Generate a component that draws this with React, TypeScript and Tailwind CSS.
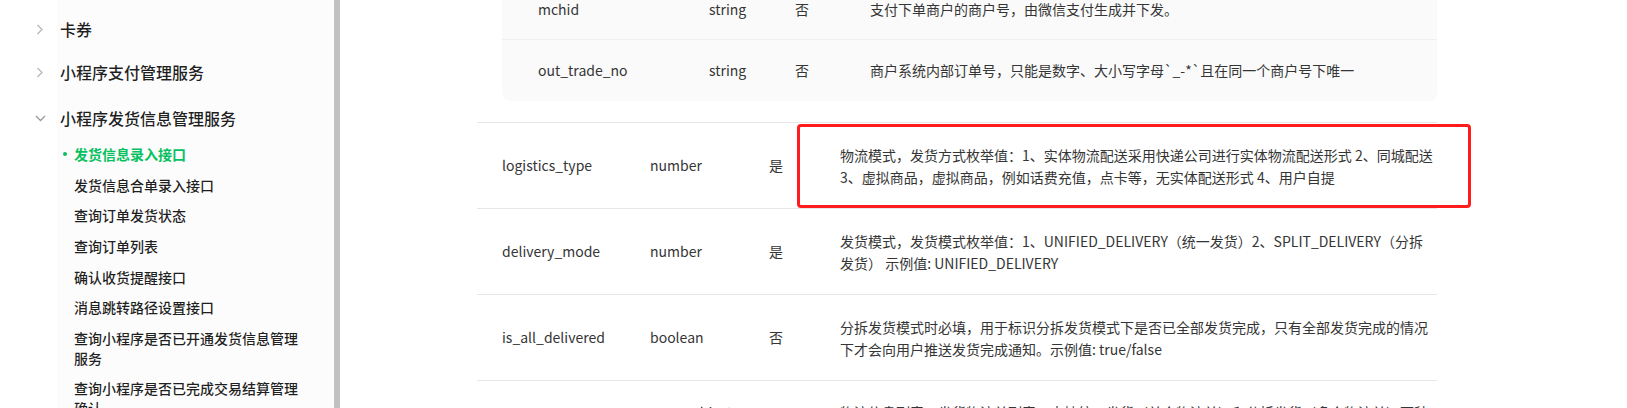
import React from "react";

const ChevronRight = () => (
  <svg width="8" height="11" viewBox="0 0 8 11" fill="none">
    <polyline points="1.5,1 6,5.5 1.5,10" stroke="#b8b8b8" strokeWidth="1.3" fill="none" />
  </svg>
);

const ChevronDown = () => (
  <svg width="11" height="7" viewBox="0 0 11 7" fill="none">
    <polyline points="1,1 5.5,5.5 10,1" stroke="#9a9a9a" strokeWidth="1.3" fill="none" />
  </svg>
);

const subItems = [
  "发货信息合单录入接口",
  "查询订单发货状态",
  "查询订单列表",
  "确认收货提醒接口",
  "消息跳转路径设置接口",
  "查询小程序是否已开通发货信息管理服务",
  "查询小程序是否已完成交易结算管理确认",
];

type Row = { name: string; type: string; req: string; desc: string[] };

const mainRows: Row[] = [
  {
    name: "logistics_type",
    type: "number",
    req: "是",
    desc: [
      "物流模式，发货方式枚举值：1、实体物流配送采用快递公司进行实体物流配送形式 2、同城配送",
      "3、虚拟商品，虚拟商品，例如话费充值，点卡等，无实体配送形式 4、用户自提",
    ],
  },
  {
    name: "delivery_mode",
    type: "number",
    req: "是",
    desc: [
      "发货模式，发货模式枚举值：1、UNIFIED_DELIVERY（统一发货）2、SPLIT_DELIVERY（分拆",
      "发货） 示例值: UNIFIED_DELIVERY",
    ],
  },
  {
    name: "is_all_delivered",
    type: "boolean",
    req: "否",
    desc: [
      "分拆发货模式时必填，用于标识分拆发货模式下是否已全部发货完成，只有全部发货完成的情况",
      "下才会向用户推送发货完成通知。示例值: true/false",
    ],
  },
];

export default function App() {
  return (
    <div className="flex h-[408px] w-[1627px] overflow-hidden bg-white font-['Noto_Sans_CJK_SC',sans-serif]">
      {/* Sidebar */}
      <aside className="w-[334px] shrink-0 bg-[linear-gradient(to_right,#ffffff_57px,#fcfcfc_57px)] pt-[7px] text-[rgba(0,0,0,0.88)]">
        <div className="flex h-[44px] items-center">
          <div className="flex w-[60px] shrink-0 pl-[36px]">
            <ChevronRight />
          </div>
          <span className="text-[16px] font-medium leading-[24px]">卡券</span>
        </div>
        <div className="flex h-[42px] items-center">
          <div className="flex w-[60px] shrink-0 pl-[36px]">
            <ChevronRight />
          </div>
          <span className="text-[16px] font-medium leading-[24px]">小程序支付管理服务</span>
        </div>
        <div className="flex h-[46px] items-center pt-[4px]">
          <div className="flex w-[60px] shrink-0 pl-[35px]">
            <ChevronDown />
          </div>
          <span className="text-[16px] font-medium leading-[24px]">小程序发货信息管理服务</span>
        </div>
        <ul>
          <li className="flex items-center py-[5.3px] pl-[63px] pr-[30px] text-[14px] font-semibold leading-[20px] text-[#07c160]">
            <span className="mr-[7px] h-[4px] w-[4px] shrink-0 rounded-full bg-[#07c160]" />
            <span>发货信息录入接口</span>
          </li>
          {subItems.map((s) => (
            <li
              key={s}
              className="py-[5.3px] pl-[74px] pr-[30px] text-[14px] font-medium leading-[20px] text-[rgba(0,0,0,0.88)]"
            >
              {s}
            </li>
          ))}
        </ul>
      </aside>

      {/* Scrollbar */}
      <div className="w-[6px] shrink-0 bg-[#c1c1c1]" />

      {/* Main */}
      <main className="flex-1 pl-[137px] text-[14px] text-[#353535]">
        <div className="w-[960px]">
          {/* nested table */}
          <div className="ml-[25px] mt-[-21px] rounded-b-[8px] bg-[#fafafa]">
            <div className="flex h-[61px] items-center border-b border-[#efefef]">
              <div className="w-[207px] shrink-0 pl-[36px]">mchid</div>
              <div className="w-[86px] shrink-0">string</div>
              <div className="w-[75px] shrink-0">否</div>
              <div className="flex-1">支付下单商户的商户号，由微信支付生成并下发。</div>
            </div>
            <div className="flex h-[61px] items-center">
              <div className="w-[207px] shrink-0 pl-[36px]">out_trade_no</div>
              <div className="w-[86px] shrink-0">string</div>
              <div className="w-[75px] shrink-0">否</div>
              <div className="flex-1">商户系统内部订单号，只能是数字、大小写字母`_-*`且在同一个商户号下唯一</div>
            </div>
          </div>

          {/* main table */}
          <div className="relative mt-[21px] border-t border-[#e6e6e6]">
            {mainRows.map((r) => (
              <div key={r.name} className="flex h-[86px] items-center border-b border-[#e6e6e6]">
                <div className="w-[173px] shrink-0 pl-[25px]">{r.name}</div>
                <div className="w-[119px] shrink-0">{r.type}</div>
                <div className="w-[71px] shrink-0">{r.req}</div>
                <div className="flex-1 whitespace-nowrap leading-[22px]">
                  {r.desc.map((l, i) => (
                    <div key={i}>{l}</div>
                  ))}
                </div>
              </div>
            ))}
            <div className="flex items-center py-[20px]">
              <div className="w-[173px] shrink-0 pl-[25px]">shipping_list</div>
              <div className="w-[119px] shrink-0 self-start leading-[22px]">array&lt;object&gt;</div>
              <div className="w-[71px] shrink-0">是</div>
              <div className="flex-1 whitespace-nowrap leading-[22px]">
                <div>物流信息列表，发货物流单列表，支持统一发货（单个物流单）和分拆发货（多个物流单）两种</div>
                <div>模式，多重性: [1, 10]</div>
                <div>示例值: 见请求示例</div>
              </div>
            </div>

            {/* annotation box */}
            <div className="pointer-events-none absolute left-[320px] top-[1px] h-[84px] w-[674px] rounded-[4px] border-[3px] border-[#ff1c1c]" />
          </div>
        </div>
      </main>
    </div>
  );
}
